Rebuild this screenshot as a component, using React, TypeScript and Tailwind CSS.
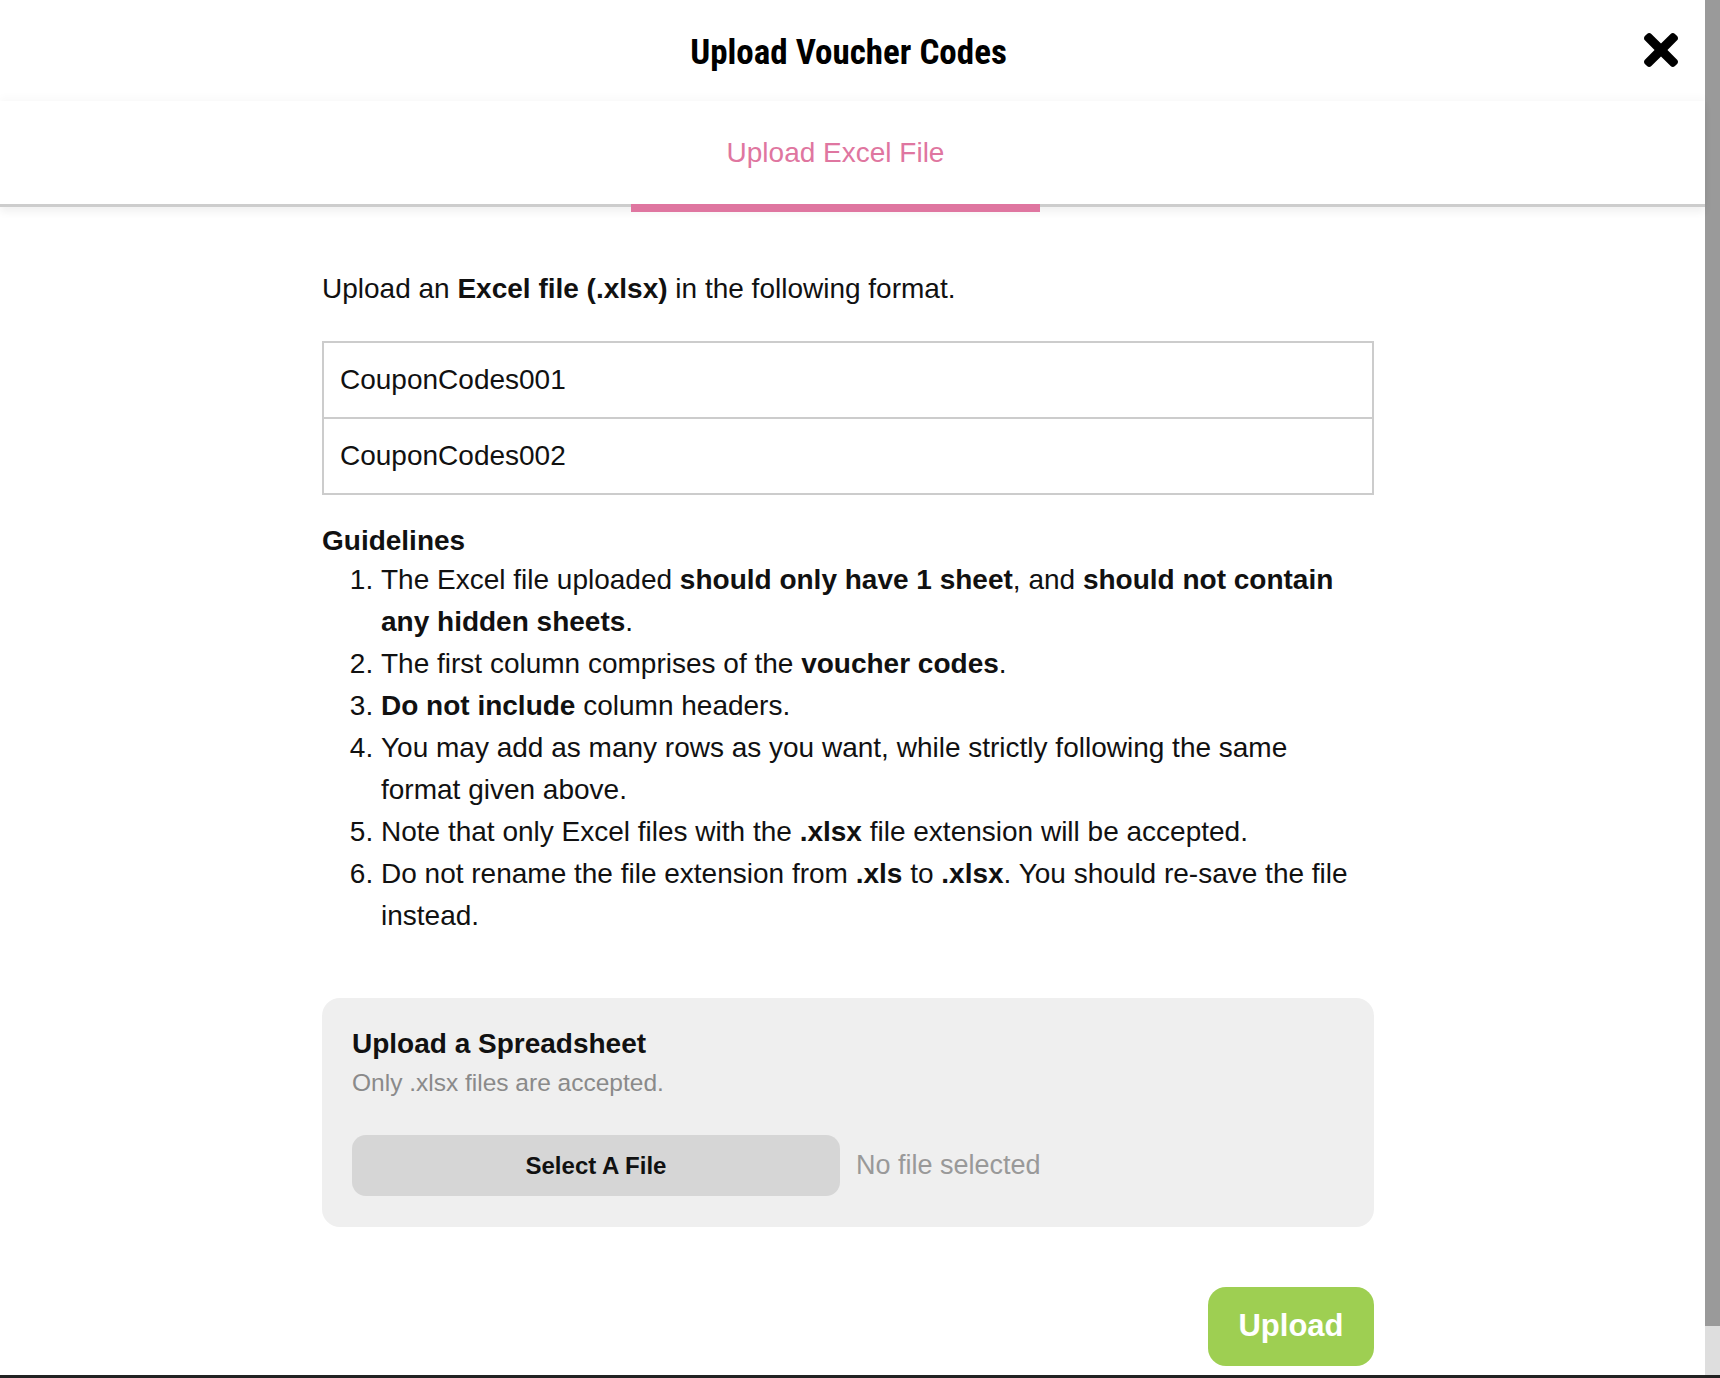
import React from 'react';

const guidelines: React.ReactNode[] = [
  <>
    The Excel file uploaded <b>should only have 1 sheet</b>, and <b>should not contain any hidden sheets</b>.
  </>,
  <>
    The first column comprises of the <b>voucher codes</b>.
  </>,
  <>
    <b>Do not include</b> column headers.
  </>,
  <>You may add as many rows as you want, while strictly following the same format given above.</>,
  <>
    Note that only Excel files with the <b>.xlsx</b> file extension will be accepted.
  </>,
  <>
    Do not rename the file extension from <b>.xls</b> to <b>.xlsx</b>. You should re-save the file instead.
  </>,
];

function CloseIcon() {
  return (
    <svg viewBox="0 80 352 352" className="h-[34px] w-[34px]" fill="currentColor">
      <path d="M242.72 256l100.07-100.07c12.28-12.28 12.28-32.19 0-44.48l-22.24-22.24c-12.28-12.28-32.19-12.28-44.48 0L176 189.28 75.930 89.21c-12.28-12.28-32.19-12.28-44.48 0L9.21 111.45c-12.28 12.28-12.28 32.19 0 44.48L109.28 256 9.21 356.07c-12.28 12.28-12.28 32.19 0 44.48l22.24 22.24c12.28 12.28 32.2 12.28 44.48 0L176 322.72l100.07 100.07c12.28 12.28 32.2 12.28 44.480 0l22.24-22.24c12.28-12.28 12.28-32.19 0-44.48L242.72 256z" />
    </svg>
  );
}

export default function App() {
  return (
    <div className="flex h-[1378px] w-full flex-col overflow-hidden bg-white font-['Liberation_Sans',Arial,sans-serif] text-[#111]">
      <div className="flex min-h-0 flex-1">
        {/* Modal */}
        <div className="flex min-w-0 flex-1 flex-col">
          {/* Header */}
          <div className="relative flex h-[101px] shrink-0 items-center justify-center bg-white pr-[8px] pt-[4px]">
            <h1 className="font-['Roboto_Condensed','Roboto',sans-serif] text-[35px] font-bold leading-none text-black">
              Upload Voucher Codes
            </h1>
            <button className="absolute right-[27px] top-[33px] text-black">
              <CloseIcon />
            </button>
          </div>

          {/* Tabs */}
          <div className="relative z-10 flex h-[106px] shrink-0 border-b-[3px] border-[#cdcdcd] bg-white shadow-[0_-4px_8px_rgba(0,0,0,0.025),0_5px_8px_rgba(0,0,0,0.06)]">
            <button className="ml-[631px] flex h-[111px] w-[409px] items-center justify-center border-b-8 border-[#df76a0] text-[28px] text-[#df76a0]">
              Upload Excel File
            </button>
          </div>

          {/* Body */}
          <div className="ml-[322px] w-[1052px] pt-[61px] text-[28px]">
            <p className="leading-[42px]">
              Upload an <b>Excel file (.xlsx)</b> in the following format.
            </p>

            <div className="mt-[31px] border-2 border-[#cccccc]">
              <div className="border-b-2 border-[#cccccc] px-[16px] py-[16px] leading-[42px]">CouponCodes001</div>
              <div className="px-[16px] py-[16px] leading-[42px]">CouponCodes002</div>
            </div>

            <h2 className="mt-[27px] font-bold leading-[37px]">Guidelines</h2>
            <ol className="list-decimal pl-[59px] leading-[42px]">
              {guidelines.map((g, i) => (
                <li key={i}>{g}</li>
              ))}
            </ol>

            {/* Upload panel */}
            <div className="mt-[61px] rounded-[18px] bg-[#efefef] px-[30px] pb-[31px] pt-[28px]">
              <h3 className="font-bold leading-[36px]">Upload a Spreadsheet</h3>
              <p className="text-[24.5px] leading-[42px] text-[#8a8a8a]">Only .xlsx files are accepted.</p>
              <div className="mt-[31px] flex items-center">
                <button className="flex h-[61px] w-[488px] items-center justify-center rounded-[14px] bg-[#d6d6d6] text-[24px] font-bold text-[#111]">
                  Select A File
                </button>
                <span className="ml-[16px] text-[27px] text-[#999999]">No file selected</span>
              </div>
            </div>

            <div className="mt-[60px] flex justify-end">
              <button className="flex h-[79px] w-[166px] items-center justify-center rounded-[18px] bg-[#9ecf52] text-[31px] font-bold text-white">
                Upload
              </button>
            </div>
          </div>
        </div>

        {/* Scrollbar */}
        <div className="flex w-[15px] shrink-0 flex-col bg-[#dedede]">
          <div className="h-[1326px] bg-[#9a9a9a]" />
        </div>
      </div>
      <div className="h-[3px] shrink-0 bg-[#222222]" />
    </div>
  );
}
